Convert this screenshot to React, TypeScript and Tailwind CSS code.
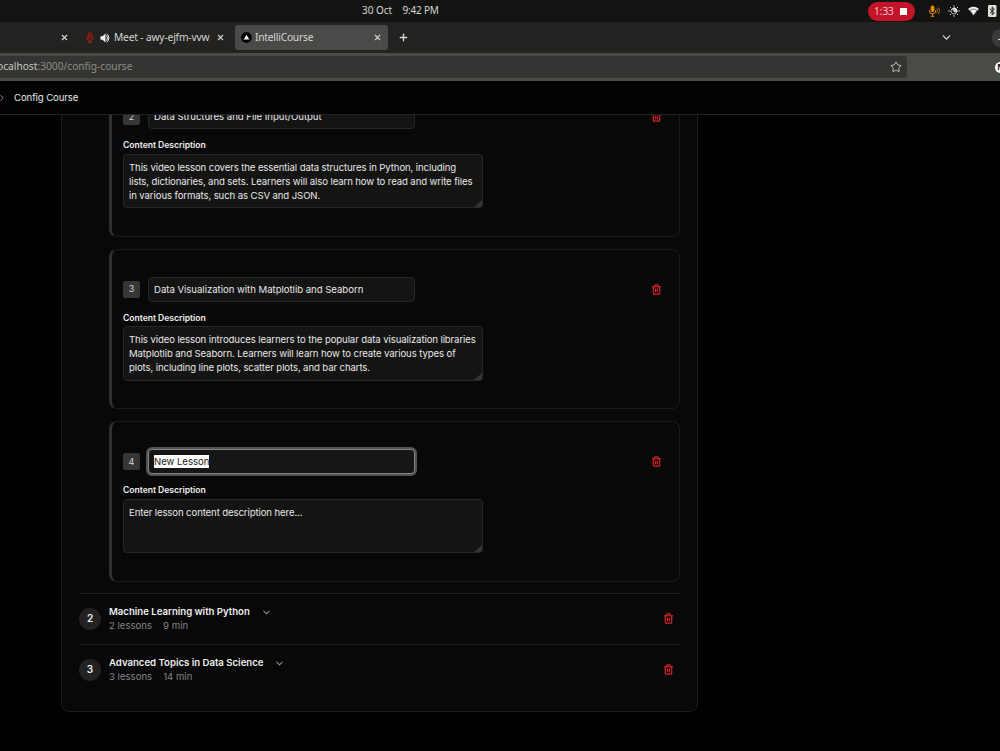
import { ChevronDown, ChevronRight, Plus, Star, Trash2, X } from "lucide-react"

type Lesson = {
  number: number
  title: string
  lines: string[]
  focused?: boolean
}

const lessons: Lesson[] = [
  {
    number: 2,
    title: "Data Structures and File Input/Output",
    lines: [
      "This video lesson covers the essential data structures in Python, including",
      "lists, dictionaries, and sets. Learners will also learn how to read and write files",
      "in various formats, such as CSV and JSON.",
    ],
  },
  {
    number: 3,
    title: "Data Visualization with Matplotlib and Seaborn",
    lines: [
      "This video lesson introduces learners to the popular data visualization libraries",
      "Matplotlib and Seaborn. Learners will learn how to create various types of",
      "plots, including line plots, scatter plots, and bar charts.",
    ],
  },
  {
    number: 4,
    title: "New Lesson",
    lines: ["Enter lesson content description here..."],
    focused: true,
  },
]

const modules = [
  { number: 2, title: "Machine Learning with Python", count: "2 lessons", time: "9 min" },
  { number: 3, title: "Advanced Topics in Data Science", count: "3 lessons", time: "14 min" },
]

function SystemBar() {
  return (
    <div className="flex h-[22px] shrink-0 items-center bg-[#131411] text-[10px] text-[#d6d6d4]">
      <div className="flex w-[868px] gap-[11px] pb-px pl-[362px]">
        <span className="w-[29.500px] whitespace-nowrap tracking-[-0.05px]">30 Oct</span>
        <span className="tracking-[-0.2px]">9:42 PM</span>
      </div>
      <div className="flex h-[19px] w-[47px] shrink-0 items-center gap-[6px] rounded-full bg-[#c4142a] pl-[6px] text-[#f0c8cc]">
        <span className="w-[20px]">1:33</span>
        <span className="size-[7px] bg-white" />
      </div>
      <svg className="ml-[13px] shrink-0" width="13" height="12" viewBox="0 0 13 12" fill="none" stroke="#e58a10">
        <rect x="2.6" y="0.5" width="3.8" height="6.5" rx="1.9" fill="#e58a10" stroke="none" />
        <path d="M1.300 5v.8a3.2 3.2 0 0 0 6.400 0V5M4.5 9v2.3M2.8 11.3h3.4" />
        <path d="M8.8 3.5q1 2.2 0 4.4M10.6 2.5q1.8 3.2 0 6.4" strokeWidth=".7" />
      </svg>
      <svg className="ml-[7px] shrink-0" width="12" height="12" viewBox="0 0 12 12" fill="none" stroke="#dededc">
        <path d="M6 .3v1.5M6 10.2v1.5M.3 6h1.5M10.2 6h1.5M2 2l1.1 1.1M8.9 8.9L10 10M2 10l1.1-1.1M8.9 3.1L10 2" />
        <path d="M5 3.2A3 3 0 1 0 8.8 7 3 3 0 0 1 5 3.2z" strokeWidth=".8" />
        <path d="M5.2 3A3.1 3.1 0 0 1 9 6.8 3.4 3.4 0 0 1 5.2 3z" fill="#dededc" />
      </svg>
      <svg className="ml-[8px] shrink-0" width="11" height="10" viewBox="0 0 11 10">
        <path d="M.2 2.9Q5.5-1.6 10.8 2.9L5.5 9.4z" fill="#7c7c78" />
        <path d="M.2 2.9Q5.5-1.6 10.8 2.9L9.7 4.2Q5.5.9 1.3 4.2zM2.5 4.4Q5.5 2.5 8.5 4.4L5.5 9z" fill="#f0f0ee" />
      </svg>
      <svg className="ml-[9px] shrink-0" width="9" height="12" viewBox="0 0 9 12">
        <rect width="8.5" height="12" rx="1.3" fill="#deded8" />
        <path d="M2 3.8l4.3 4.1L4.2 10V2l2.1 2.1L2 8.2" fill="none" stroke="#22221f" />
      </svg>
    </div>
  )
}

function TabBar() {
  return (
    <div className="flex h-[31px] shrink-0 items-center bg-[#222220] text-[10.2px] text-[#d5d5d2]">
      <X className="ml-[60px] shrink-0" size={9} strokeWidth={3} />
      <svg className="ml-[17px] shrink-0" width="8" height="11" viewBox="0 0 8 11" fill="none" stroke="#b01f16">
        <rect x="2.500" y=".8" width="3" height="5.400" rx="1.500" fill="#5e130e" />
        <path d="M.8 4.500v.7a3.200 3.200 0 0 0 6.400 0v-.7M4 8.400v2M2 10.400h4" />
      </svg>
      <svg className="ml-[6px] shrink-0" width="10" height="10" viewBox="0 0 10 10">
        <path d="M.5 3.2h2L5.5.5v9L2.500 6.800h-2z" fill="#f0f0ee" />
        <path d="M6.600 2.500q1.800 2.500 0 5M7 .800q3.600 4.200 0 8.400" fill="none" stroke="#f0f0ee" />
      </svg>
      <span className="ml-[4px] w-[97px] shrink-0 whitespace-nowrap tracking-[-0.15px]">Meet - awy-ejfm-vvw</span>
      <X className="ml-[5px] shrink-0" size={9} strokeWidth={3} />
      <div className="ml-[10px] flex h-[25px] w-[153px] shrink-0 items-center rounded-[3px] bg-[#4a4a48]">
        <svg className="ml-[6px] shrink-0" width="11" height="11" viewBox="0 0 11 11">
          <circle cx="5.500" cy="5.500" r="5.400" fill="#000" />
          <path d="M5.500 2.700l2.800 4.800H2.700z" fill="#fff" />
        </svg>
        <span className="ml-[3px] w-[118px] tracking-[-0.2px]">IntelliCourse</span>
        <X className="shrink-0" size={9} strokeWidth={3} />
      </div>
      <Plus className="ml-[10px] shrink-0" size={11} strokeWidth={3} />
      <ChevronDown className="ml-[531px] shrink-0" size={13} strokeWidth={2.500} />
      <div className="ml-[39px] flex h-[18px] w-[8px] shrink-0 items-center overflow-hidden rounded-l-full bg-[#3b3b39] pl-[6px] pt-[4px]">
        <span className="h-px w-[4px] shrink-0 bg-[#ddd]" />
      </div>
    </div>
  )
}

function AddressBar() {
  return (
    <div className="flex h-[28px] shrink-0 items-center overflow-hidden bg-[#4a4a47]">
      <div className="flex h-[22px] w-[907px] shrink-0 items-center rounded-r-[3px] bg-[#343432] text-[10.2px]">
        <div className="-ml-[3px] w-[893px] whitespace-nowrap text-[#8c8c89]">
          <span className="text-[#c8c8c5]">ocalhost</span>:3000/config-course
        </div>
        <Star className="shrink-0 text-[#c5c5c2]" size={12} strokeWidth={2} />
      </div>
      <div className="ml-[88px] flex size-[11px] shrink-0 items-center justify-center rounded-full bg-white text-[8px] font-bold text-black">
        N
      </div>
    </div>
  )
}

function LessonCard({ lesson }: { lesson: Lesson }) {
  return (
    <div className="h-[160.5px] shrink-0 rounded-[8px] border border-l-[3px] border-[#1b1b1b] border-l-[#303030] pl-[11px] pt-[27.2px]">
      <div className="flex h-[25px] items-center">
        <span className="flex size-[17px] items-center justify-center rounded-[2px] bg-[#363636] text-[9px] text-[#d2d2d2]">
          {lesson.number}
        </span>
        <div
          className={
            lesson.focused
              ? "ml-[8px] flex h-[25px] w-[267px] items-center rounded-[4px] border border-[#858585] bg-[#161616] px-[5px] tracking-[-0.05px] ring-2 ring-[#525252]"
              : "ml-[8px] flex h-[25px] w-[267px] items-center rounded-[4px] border border-[#272727] bg-[#141413] px-[5px] tracking-[-0.03px]"
          }
        >
          <span className={lesson.focused ? "bg-white leading-[13px] text-[#222]" : "leading-[13px]"}>{lesson.title}</span>
        </div>
        <Trash2 className="ml-[235.500px] text-[#d92428]" size={11} strokeWidth={2.600} />
      </div>
      <div className="mt-[9.300px] text-[8.6px] leading-[14px] font-semibold tracking-[-0.03px] text-[#f0f0f0]">
        Content Description
      </div>
      <div className="relative mt-[1.500px] h-[54.5px] w-[360px] rounded-[4px] border border-[#272727] bg-[#141413] px-[5px] pt-[5.800px] leading-[14px] tracking-[-0.11px] whitespace-nowrap">
        {lesson.lines.map((line) => (
          <div key={line}>{line}</div>
        ))}
        <svg className="absolute right-0 bottom-0" width="8" height="7" viewBox="0 0 8 7">
          <path d="M0 7L8 0v4.500Q8 7 5.500 7z" fill="#343434" />
        </svg>
      </div>
    </div>
  )
}

function ModuleRow({ module }: { module: (typeof modules)[number] }) {
  return (
    <div className="flex h-[50.7px] shrink-0 items-center border-t border-[#1c1c1c]">
      <span className="flex size-[22px] shrink-0 items-center justify-center rounded-full bg-[#222] text-[10px] font-semibold text-[#eee]">
        {module.number}
      </span>
      <div className="ml-[8px] w-[553.500px] pt-px">
        <div className="flex h-[14px] items-center gap-[11px] font-semibold text-[#eee]">
          <span>{module.title}</span>
          <ChevronDown className="text-[#8e8e8e]" size={11} strokeWidth={2.200} />
        </div>
        <div className="flex h-[14px] items-center gap-[11px] text-[#858585]">
          <span>{module.count}</span>
          <span>{module.time}</span>
        </div>
      </div>
      <Trash2 className="shrink-0 text-[#d92428]" size={11} strokeWidth={2.600} />
    </div>
  )
}

export default function App() {
  return (
    <div className="flex h-[751px] w-[1000px] flex-col overflow-hidden bg-black font-['Noto_Sans',sans-serif]">
      <SystemBar />
      <TabBar />
      <AddressBar />
      <div className="flex grow flex-col overflow-hidden font-['Inter',sans-serif] text-[9.6px] text-[#e8e8e8]">
        <header className="flex h-[34px] shrink-0 items-center border-b border-[#222] bg-[#030303] pt-[1.500px]">
          <ChevronRight className="-ml-[3px] text-[#999]" size={10} strokeWidth={2.200} />
          <span className="ml-[7px] tracking-[-0.1px]">Config Course</span>
        </header>
        <main className="grow overflow-hidden">
          <section className="-mt-[51px] ml-[61px] flex h-[648px] w-[637px] flex-col rounded-[8px] border border-[#1d1d1d] bg-[#080808] px-[17px] pt-[11px]">
            <div className="mb-[11.500px] ml-[30px] flex w-[571px] flex-col gap-[12px]">
              {lessons.map((lesson) => (
                <LessonCard key={lesson.number} lesson={lesson} />
              ))}
            </div>
            {modules.map((module) => (
              <ModuleRow key={module.number} module={module} />
            ))}
          </section>
        </main>
      </div>
    </div>
  )
}
